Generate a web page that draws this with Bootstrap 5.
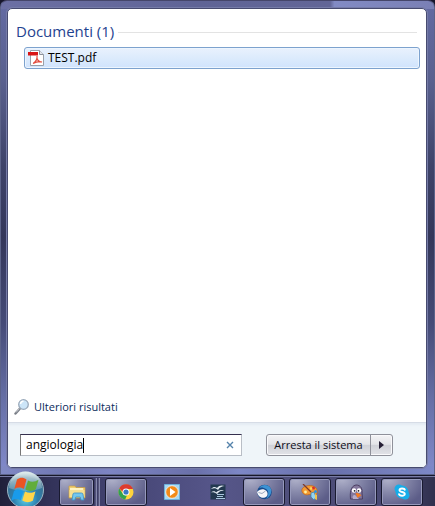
<!DOCTYPE html>
<html lang="it">
<head>
<meta charset="utf-8">
<meta name="viewport" content="width=device-width, initial-scale=1">
<title>Menu Start</title>
<link href="https://cdn.jsdelivr.net/npm/bootstrap@5.3.0/dist/css/bootstrap.min.css" rel="stylesheet">
<style>
body{font-family:"Open Sans","Noto Sans",sans-serif;font-size:12px;line-height:16px;color:#000;background:#30304f}
.frame{padding:7px 7px 6px 6px;border:1px solid #5c6389;border-top-color:#45466a;border-radius:7px 7px 0 0;
 background:
 linear-gradient(90deg,#6c70a4 0,#5f6496 45%,#626697 76%,#828bc4 77%,#7a80b5 100%) top/100% 8px no-repeat,
 linear-gradient(90deg,#8089c4,#7178b4 14%,#7d85c4 25%,#6a70a9 45%,#7d87c6 55%,#6870ab 75%,#7d88c8) bottom/100% 8px no-repeat,
 linear-gradient(180deg,#646ba3 0,#59608e 17%,#3e4369 35%,#34375a 50%,#454b77 68%,#666fa5 84%,#828bcc 100%)}
.screen{background:#16162b}
.panel{background:#fff;border:1px solid #474b70;border-radius:5px;overflow:hidden;outline:1px solid #767ca8}
.results{padding:12px 6px 6px 6px}
.group-title{font-size:15px;line-height:20px;color:#1f4390;font-weight:400;margin:0 0 6px 2px}
.rule{height:1px;background:#e3e3e3;margin:0 3px 4px 0}
.hit{height:22px;margin-left:10px;padding:0 3px;border:1px solid #7da2ce;border-radius:3px;background:linear-gradient(#e9f1fd,#dcebfc 50%,#d0e3fd);box-shadow:inset 0 0 0 1px #edf5fe;color:#000;gap:4px}
.more{color:#0b2c5c;gap:4px;font-size:11px}
.foot{background:#eff5f9;border-top:1px solid #d6dce6;box-shadow:inset 0 2px 2px #e4ebf3;padding:11px 33px 11px 12px;gap:24px}
.search{flex:0 1 222px;min-width:0;height:22px;background:#fff;border:1px solid #b9bec6;border-top-color:#35304e;border-left-color:#777}
.search input{min-width:0;border:0;outline:0;padding:0 0 1px 5px;color:#000;caret-color:transparent;background:linear-gradient(#000,#000) 62px 50%/1px 15px no-repeat}
.clear{border:0;background:none;padding:0;width:23px}
.power{height:22px;border:1px solid #8f919a;border-radius:3px;background:linear-gradient(#f4f4f6,#e3e4e8 47%,#cfd1d7 50%,#e2e3e8);box-shadow:inset 0 0 0 1px #fafafc}
.power button{border:0;background:none;padding:0;color:#0c0c18;font-size:11px}
.power .main{width:103px;white-space:nowrap}
.power .arrow{width:22px;border-left:1px solid #8f919a}
.tasks{height:31px;padding:2px 12px 0 6px;gap:4px;border-top:1px solid #17172a;box-shadow:inset 0 1px #777ba5;background:linear-gradient(90deg,#20203a,#33335a 12%,#484878 32%,#56568a 50%,#50507c 65%,#484872 90%,#30304d)}
.orb{width:39px;height:38px;padding:0;border:0;background:none;margin-top:-7px;flex:none}
.task{width:42px;height:28px;flex:none;padding:0;border:1px solid transparent;border-radius:3px;background:none}
.open{border-color:#191a30;box-shadow:inset 0 0 0 1px #9699bb;background:radial-gradient(ellipse at 15% 0,#b0b2ca 0,#8587a9 38%,#5c5d88 80%)}
.pile{gap:1px;margin:0 -2px 0 10px;flex:none}
.pile .task{width:35px}
.edge{width:2px;height:28px;background:#545579;border-right:1px solid #8689ae}
svg{display:block;flex:none}
</style>
<script src="https://cdn.jsdelivr.net/npm/bootstrap@5.3.0/dist/js/bootstrap.bundle.min.js"></script>
</head>
<body class="overflow-hidden">
<div class="screen d-flex flex-column vh-100">
<main class="frame d-flex flex-grow-1">
 <section class="panel d-flex flex-column flex-grow-1">
  <div class="results d-flex flex-column flex-grow-1">
   <div class="d-flex align-items-center"><h1 class="group-title">Documenti (1)</h1><div class="rule flex-grow-1 ms-1"></div></div>
   <a href="#" class="hit d-flex align-items-center text-decoration-none">
    <svg width="16" height="16" viewBox="0 0 16 16" aria-hidden="true"><path d="M2.500.5h9l4 4v11h-13z" fill="#fff" stroke="#9aa0a8"/><path d="M11.500.5v4h4" fill="#e1e5ec" stroke="#8c939e"/><path d="M0 2h10v3.500H0z" fill="#d91414"/><path d="M5 13.500c3-1.500 4.500-5 4-7.500M9 8.500c.8 2.200 2.500 3.500 5 3.500-3-.8-6 0-9 1.500" fill="none" stroke="#e34c3d" stroke-width="1.200"/></svg>
    <span>TEST.pdf</span></a>
   <a href="#" class="more d-flex align-items-center text-decoration-none mt-auto">
    <svg width="16" height="18" viewBox="0 0 16 18" aria-hidden="true"><path d="M1.500 15.500l4.500-5" stroke="#777c85" stroke-width="2.400" stroke-linecap="round"/><path d="M2 14.500l3.500-4" stroke="#c6cad0"/><circle cx="9.500" cy="6.500" r="4.800" fill="#cce5f8" stroke="#9aa9ba" stroke-width="1.300"/><path d="M6.500 6a3 3 0 0 1 3-2.700" fill="none" stroke="#fff" stroke-width="1.500"/></svg>
    <span>Ulteriori risultati</span></a>
  </div>
  <div class="foot d-flex align-items-center">
   <div class="search d-flex align-items-center"><input class="flex-grow-1" type="text" value="angiologia" aria-label="Cerca" autofocus>
    <button class="clear d-flex justify-content-center" aria-label="Cancella"><svg width="8" height="8" viewBox="0 0 8 8"><path d="M1 1l6 6M7 1L1 7" stroke="#5583ab" stroke-width="1.400"/></svg></button></div>
   <div class="power d-flex flex-shrink-0"><button class="main">Arresta il sistema</button><button class="arrow d-flex align-items-center justify-content-center" aria-label="Altre opzioni"><svg width="5" height="8" viewBox="0 0 5 8"><path d="M0 0l5 4-5 4z" fill="#251f35"/></svg></button></div>
  </div>
 </section>
</main>
<nav class="tasks d-flex" aria-label="Barra delle applicazioni">
 <button class="orb" aria-label="Start"><svg width="39" height="38" viewBox="0 0 39 38"><defs><radialGradient id="ob" cx=".5" cy=".75" r=".75"><stop offset="0" stop-color="#5fd0ea"/><stop offset=".45" stop-color="#2b7fae"/><stop offset=".8" stop-color="#3c6f8f"/><stop offset="1" stop-color="#a9c8d4"/></radialGradient><linearGradient id="gl" x2="0" y2="1"><stop stop-color="#eef6f6" stop-opacity=".85"/><stop offset="1" stop-color="#c3dddd" stop-opacity=".25"/></linearGradient></defs><circle cx="19.500" cy="19" r="18" fill="url(#ob)" stroke="#9bb5c4"/><path d="M3 17a16.500 16.500 0 0 1 33 0c-9 4-24 4-33 0z" fill="url(#gl)"/><path d="M11 8.500c3.500-2.500 6.500-2 9.500 0l-2.700 9.500c-3.500-2-6.500-1.800-9.500 0z" fill="#ec5422"/><path d="M22 9.500c3.500 2 7 1.500 10.500-.7l-2.700 9.500c-3.500 2.200-7 2.200-10.500.2z" fill="#61ad3b"/><path d="M8 20c3.500-2.200 6.500-1.900 9.500 0l-2.700 9.500c-3.500-2.200-6.500-1.800-9.500.2z" fill="#199bea"/><path d="M19 20.500c3.500 2 7 1.700 10.500-.3l-2.700 9.500c-3.500 2-7 1.900-10.500-.2z" fill="#ffd54a"/></svg></button>
 <div class="pile d-flex me-auto"><button class="task open d-flex align-items-center justify-content-center" aria-label="Esplora risorse"><svg width="18" height="17" viewBox="0 0 18 17"><path d="M1 2h6l1 1.500h9V14H1z" fill="#f0cf70" stroke="#c99b3f" stroke-width=".7"/><path d="M2 4h13v8H2z" fill="#fff3c0"/><path d="M1.500 6h15v7h-15z" fill="#f6df93"/><path d="M4 16l1-6q.2-1 1.500-1h7q1.200 0 1.400 1l1.100 6h-3l-.8-3H7.800L6.800 16z" fill="#75c7ee" stroke="#3c8fc4" stroke-width=".8"/></svg></button><i class="edge"></i><i class="edge"></i></div>
 <button class="task open d-flex align-items-center justify-content-center" aria-label="Chrome"><svg width="16" height="16" viewBox="0 0 16 16"><circle cx="8" cy="8" r="7.500" fill="#ffd43b"/><path d="M1.300 4.500A7.500 7.500 0 0 1 15 5H8a3 3 0 0 0-3 3z" fill="#dd3b2e"/><path d="M1.300 4.500L5 10a3.500 3.500 0 0 0 4 1.200L7.200 15.500A7.500 7.500 0 0 1 1.300 4.500z" fill="#31a350"/><circle cx="8" cy="8" r="3.500" fill="#fff"/><circle cx="8" cy="8" r="2.600" fill="#3978c4"/></svg></button>
 <button class="task d-flex align-items-center justify-content-center" aria-label="Media Player"><svg width="16" height="16" viewBox="0 0 16 16"><path d="M.5.5h15v15H.5z" fill="#a9d9f2" stroke="#6cb1dc"/><circle cx="8" cy="8" r="6.300" fill="#f28a18" stroke="#e8f6fc" stroke-width=".8"/><path d="M6 4l5.500 4L6 12z" fill="#fff"/></svg></button>
 <button class="task d-flex align-items-center justify-content-center" aria-label="Writer"><svg width="16" height="16" viewBox="0 0 16 16"><path d="M.5.5h15v15H.5z" fill="#22384f"/><path d="M1 5c3-3 4-2 6-1 2-3 5-3 8-2-3 0-5 1-7 4-2-2-4-2-7-1zM1 8.500c3-2 4-1 5 0 2-2 5-3 8-2-3 0-5 1-7 3.500-2-1.500-4-2-6-1.500z" fill="#e3ebf3"/><path d="M7 10.500h7M7 12.500h6M6 14.500h9" stroke="#a9c7de"/></svg></button>
 <button class="task open d-flex align-items-center justify-content-center" aria-label="Thunderbird"><svg width="16" height="16" viewBox="0 0 16 16"><circle cx="8.500" cy="8" r="7.300" fill="#174a8c"/><path d="M3 4C6-.5 13 0 15 5c1 4-1 8-5 10 3-4 3-8 0-10C8 3.500 5 3 3 4z" fill="#3d93d4"/><path d="M1 8C4 4.500 8 4.500 10.500 7c2 2.500 1 5.500-1.500 6.500-3 1-6.500 0-8-5.500z" fill="#f5f6f9"/><path d="M2.500 8.500l3.500 1 3.500-2.500" fill="none" stroke="#8796b1" stroke-width=".8"/></svg></button>
 <button class="task open d-flex align-items-center justify-content-center" aria-label="Paint"><svg width="18" height="17" viewBox="0 0 18 17"><path d="M1 5C3 1 12 0 15 4c3 4 0 9-3 8-2-.5-2-2-4-1.500C4 12 0 9 1 5z" fill="#f49a32" stroke="#bd651c" stroke-width=".7"/><circle cx="4.500" cy="8" r="1.400" fill="#fff1a0"/><circle cx="12.500" cy="4" r="1.500" fill="#d92f2b"/><circle cx="14.500" cy="7.500" r="1.500" fill="#2e90df"/><circle cx="10" cy="4.500" r="1.200" fill="#ffd65c"/><path d="M2 0l8 8" stroke="#7e3929" stroke-width="1.200"/><path d="M10 9l3-1 2 5-2 3-3-3z" fill="#94d4f0" stroke="#397ca9" stroke-width=".7"/><path d="M14 10l2 1v5l-2-1z" fill="#f0c44a"/></svg></button>
 <button class="task open d-flex align-items-center justify-content-center" aria-label="Pidgin"><svg width="15" height="16" viewBox="0 0 15 16"><path d="M1.500 15C1 10 1 2 7 1c5 0 6.500 4 6 8l.5 6z" fill="#85789d" stroke="#4b3e62"/><path d="M4 15c-1-3 0-4 2-4l4 4z" fill="#b6abc8"/><circle cx="5" cy="6.500" r="2.200" fill="#fff"/><circle cx="10" cy="6.500" r="2.200" fill="#fff"/><circle cx="5.600" cy="6.800" r=".9" fill="#1d1a25"/><circle cx="9.500" cy="6.800" r=".9" fill="#1d1a25"/><path d="M6.500 9l3 .2 3 2-4 2.500z" fill="#f47b20"/></svg></button>
 <button class="task open d-flex align-items-center justify-content-center" aria-label="Skype"><svg width="16" height="16" viewBox="0 0 16 16"><circle cx="8" cy="8" r="6.500" fill="#16ade9"/><circle cx="4.800" cy="4.800" r="4.300" fill="#16ade9"/><circle cx="11.200" cy="11.200" r="4.300" fill="#16ade9"/><path d="M10.800 5.800C10.500 4.200 5.500 3.800 5.500 6.200c0 2.300 5.300 1.300 5.300 3.700 0 2.500-5.300 2.200-5.800.2" fill="none" stroke="#fff" stroke-width="1.900" stroke-linecap="round"/></svg></button>
</nav>
</div>
</body>
</html>
